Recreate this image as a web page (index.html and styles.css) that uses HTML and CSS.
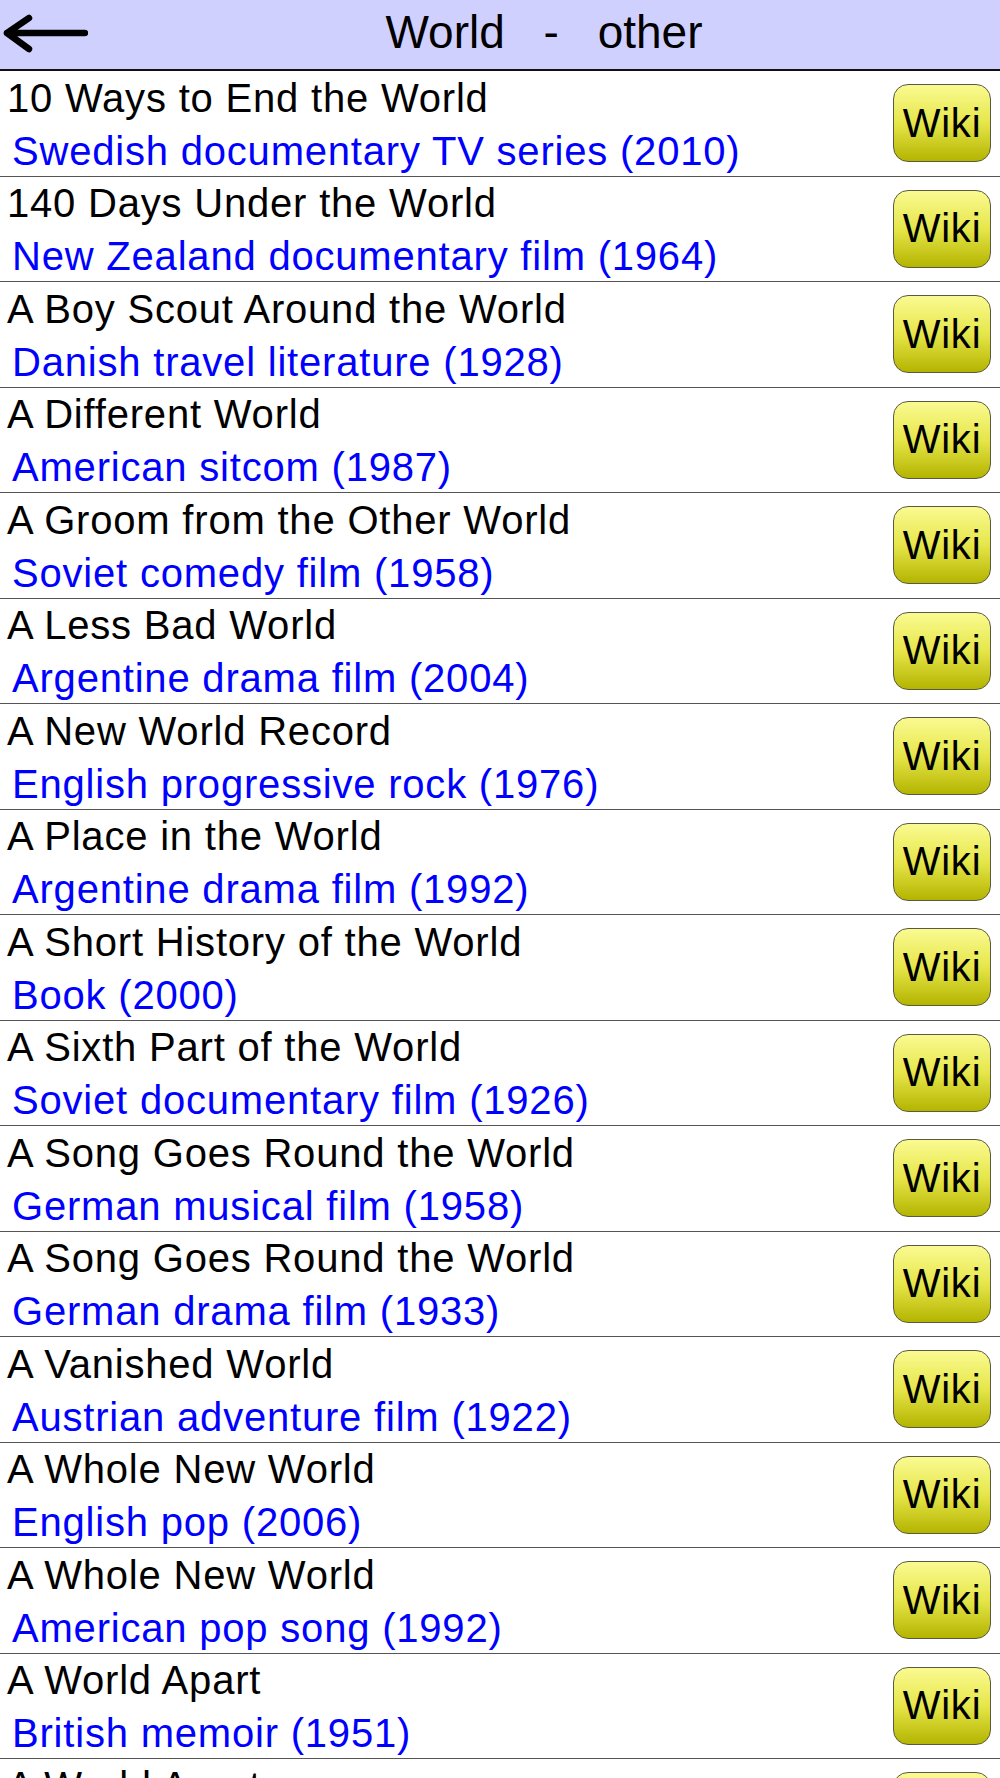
FILE: index.html
```html
<!DOCTYPE html>
<html lang="en">
<head>
    <meta charset="UTF-8">
    <meta name="viewport" content="width=device-width, initial-scale=1.0">
    <title>World - other</title>
    <link rel="stylesheet" href="styles.css">
</head>
<body>

    <!-- Title bar with back arrow -->
    <div class="header">
        <button class="back-btn" aria-label="Back">
            <svg width="88" height="69" viewBox="0 0 88 69">
                <path d="M7 33 H85 M7 33 L29 18 M7 33 L29 49" fill="none" stroke="#000" stroke-width="6.5" stroke-linecap="round" stroke-linejoin="round"/>
            </svg>
        </button>
        <h1 class="title">World - other</h1>
    </div>

    <!-- List of entries -->
    <ul class="entry-list">
        <li class="entry">
            <div class="entry-text">
                <div class="entry-name">10 Ways to End the World</div>
                <div class="entry-desc">Swedish documentary TV series (2010)</div>
            </div>
            <button class="wiki-btn">Wiki</button>
        </li>
        <li class="entry">
            <div class="entry-text">
                <div class="entry-name">140 Days Under the World</div>
                <div class="entry-desc">New Zealand documentary film (1964)</div>
            </div>
            <button class="wiki-btn">Wiki</button>
        </li>
        <li class="entry">
            <div class="entry-text">
                <div class="entry-name">A Boy Scout Around the World</div>
                <div class="entry-desc">Danish travel literature (1928)</div>
            </div>
            <button class="wiki-btn">Wiki</button>
        </li>
        <li class="entry">
            <div class="entry-text">
                <div class="entry-name">A Different World</div>
                <div class="entry-desc">American sitcom (1987)</div>
            </div>
            <button class="wiki-btn">Wiki</button>
        </li>
        <li class="entry">
            <div class="entry-text">
                <div class="entry-name">A Groom from the Other World</div>
                <div class="entry-desc">Soviet comedy film (1958)</div>
            </div>
            <button class="wiki-btn">Wiki</button>
        </li>
        <li class="entry">
            <div class="entry-text">
                <div class="entry-name">A Less Bad World</div>
                <div class="entry-desc">Argentine drama film (2004)</div>
            </div>
            <button class="wiki-btn">Wiki</button>
        </li>
        <li class="entry">
            <div class="entry-text">
                <div class="entry-name">A New World Record</div>
                <div class="entry-desc">English progressive rock (1976)</div>
            </div>
            <button class="wiki-btn">Wiki</button>
        </li>
        <li class="entry">
            <div class="entry-text">
                <div class="entry-name">A Place in the World</div>
                <div class="entry-desc">Argentine drama film (1992)</div>
            </div>
            <button class="wiki-btn">Wiki</button>
        </li>
        <li class="entry">
            <div class="entry-text">
                <div class="entry-name">A Short History of the World</div>
                <div class="entry-desc">Book (2000)</div>
            </div>
            <button class="wiki-btn">Wiki</button>
        </li>
        <li class="entry">
            <div class="entry-text">
                <div class="entry-name">A Sixth Part of the World</div>
                <div class="entry-desc">Soviet documentary film (1926)</div>
            </div>
            <button class="wiki-btn">Wiki</button>
        </li>
        <li class="entry">
            <div class="entry-text">
                <div class="entry-name">A Song Goes Round the World</div>
                <div class="entry-desc">German musical film (1958)</div>
            </div>
            <button class="wiki-btn">Wiki</button>
        </li>
        <li class="entry">
            <div class="entry-text">
                <div class="entry-name">A Song Goes Round the World</div>
                <div class="entry-desc">German drama film (1933)</div>
            </div>
            <button class="wiki-btn">Wiki</button>
        </li>
        <li class="entry">
            <div class="entry-text">
                <div class="entry-name">A Vanished World</div>
                <div class="entry-desc">Austrian adventure film (1922)</div>
            </div>
            <button class="wiki-btn">Wiki</button>
        </li>
        <li class="entry">
            <div class="entry-text">
                <div class="entry-name">A Whole New World</div>
                <div class="entry-desc">English pop (2006)</div>
            </div>
            <button class="wiki-btn">Wiki</button>
        </li>
        <li class="entry">
            <div class="entry-text">
                <div class="entry-name">A Whole New World</div>
                <div class="entry-desc">American pop song (1992)</div>
            </div>
            <button class="wiki-btn">Wiki</button>
        </li>
        <li class="entry">
            <div class="entry-text">
                <div class="entry-name">A World Apart</div>
                <div class="entry-desc">British memoir (1951)</div>
            </div>
            <button class="wiki-btn">Wiki</button>
        </li>
        <li class="entry">
            <div class="entry-text">
                <div class="entry-name">A World Apart</div>
                <div class="entry-desc">British drama film (1988)</div>
            </div>
            <button class="wiki-btn">Wiki</button>
        </li>
    </ul>

</body>
</html>
```

FILE: styles.css
```css
/* General styling */
body {
    font-family: "Liberation Sans", Arial, sans-serif;
    background-color: #fff;
    margin: 0;
    padding: 0;
    color: #000;
    overflow: hidden;
}

/* Title bar */
.header {
    display: flex;
    height: 69px;
    background-color: #d0d0ff;
    border-bottom: 2px solid #111;
}
.back-btn {
    flex: 0 0 88px;
    height: 69px;
    padding: 0;
    border: none;
    background: none;
    cursor: pointer;
}
.back-btn svg {
    display: block;
}
.title {
    flex: 1;
    margin: 0;
    font-size: 46px;
    font-weight: normal;
    line-height: 65px;
    word-spacing: 26px;
    text-align: center;
}

/* Entry list */
.entry-list {
    list-style: none;
    margin: 0;
    padding: 0;
}
.entry {
    display: flex;
    align-items: center;
    box-sizing: border-box;
    height: 105.5px;
    border-bottom: 1px solid #555;
}
.entry-text {
    flex: 1;
    align-self: flex-start;
    padding-top: 1.5px;
    font-size: 40px;
    letter-spacing: 0.8px;
    line-height: 51.5px;
    white-space: nowrap;
    overflow: hidden;
}
.entry-name {
    padding-left: 7px;
}
.entry-desc {
    margin-top: 1.5px;
    padding-left: 12px;
    line-height: 50px;
    color: #0000ff;
}

/* Wiki button */
.wiki-btn {
    flex: 0 0 98px;
    box-sizing: border-box;
    height: 78px;
    margin-right: 9px;
    padding: 0;
    border: 1px solid #5a5a40;
    border-radius: 15px;
    background: linear-gradient(#fafa92, #e6e64a 50%, #b4b400);
    font-family: "Liberation Sans", Arial, sans-serif;
    font-size: 40px;
    letter-spacing: 0.8px;
    color: #000;
    cursor: pointer;
}
```
